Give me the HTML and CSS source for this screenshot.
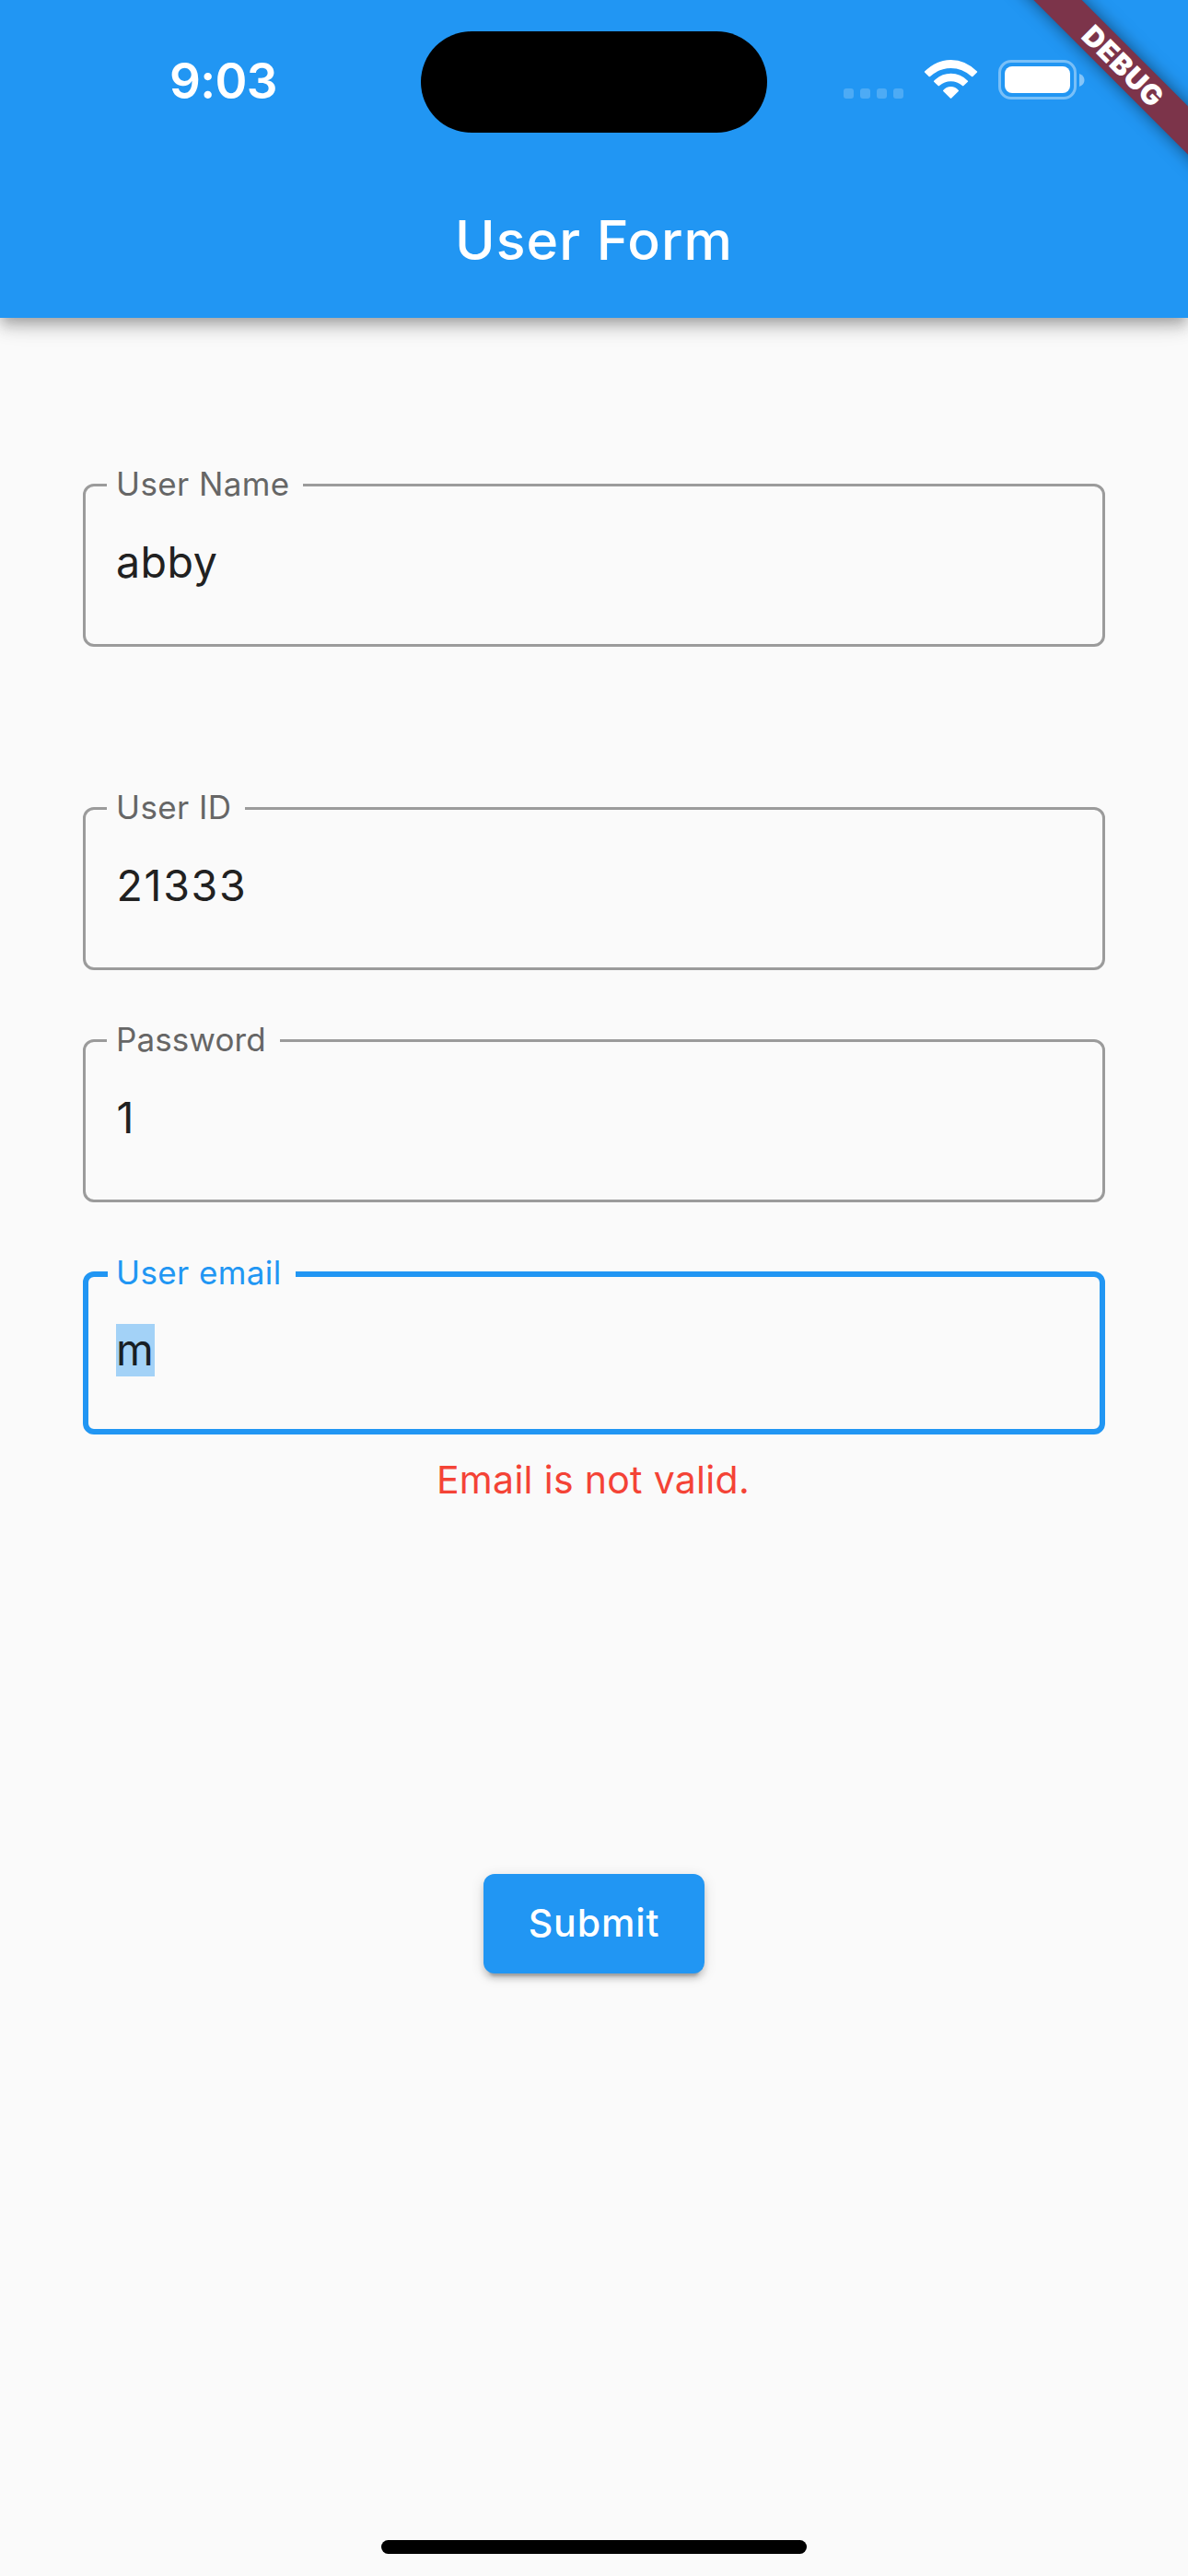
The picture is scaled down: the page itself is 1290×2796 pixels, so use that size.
FILE: index.html
```html
<!DOCTYPE html>
<html lang="en">
<head>
<meta charset="utf-8">
<title>User Form</title>
<link rel="stylesheet" href="styles.css">
</head>
<body>
<div class="screen">
  <header class="app-bar">
    <div class="status-bar">
      <span class="time">9:03</span>
      <span class="island"></span>
      <svg class="status-icons" width="264" height="44" viewBox="0 0 264 44">
        <g fill="#fff" fill-opacity=".2">
          <rect x="0" y="31" width="11" height="11" rx="3"/>
          <rect x="18" y="31" width="11" height="11" rx="3"/>
          <rect x="36" y="31" width="11" height="11" rx="3"/>
          <rect x="54" y="31" width="11" height="11" rx="3"/>
        </g>
        <g fill="#fff">
          <path d="M88 12.600Q87.600 13 88 13.500L92.600 18Q93.300 18.600 94 18Q104 9 116.500 9Q129 9 139 18Q139.700 18.600 140.400 18L145 13.500Q145.400 13 145 12.600Q132.500 0 116.500 0Q100.500 0 88 12.600Z"/>
          <path d="M98.100 22.700Q97.600 23.200 98.100 23.700L102.600 28.100Q103.200 28.700 104 28.100Q109.500 23.300 116.500 23.300Q123.500 23.300 129 28.100Q129.800 28.700 130.400 28.100L134.900 23.700Q135.400 23.200 134.900 22.700Q127 14.800 116.500 14.800Q106 14.800 98.100 22.700Z"/>
          <path d="M108.200 32.900Q107.700 33.400 108.200 33.900L115.800 41.500Q116.500 42.200 117.200 41.500L124.800 33.900Q125.300 33.400 124.800 32.900Q121.500 29 116.500 29Q111.500 29 108.200 32.900Z"/>
        </g>
        <rect x="169.500" y="1.500" width="82" height="40" rx="12.500" fill="none" stroke="#fff" stroke-opacity=".4" stroke-width="3"/>
        <rect x="175" y="7" width="71" height="29" rx="8" fill="#fff"/>
        <path d="M256 15Q261.500 17 261.500 22Q261.500 27 256 29Z" fill="#fff" fill-opacity=".45"/>
      </svg>
    </div>
    <h1 class="title">User Form</h1>
  </header>
  <div class="debug-banner">DEBUG</div>

  <main class="form">
    <div class="field field-name">
      <span class="label">User Name</span>
      <span class="value">abby</span>
    </div>
    <div class="field field-id">
      <span class="label">User ID</span>
      <span class="value digits">21333</span>
    </div>
    <div class="field field-password">
      <span class="label">Password</span>
      <span class="value digits">1</span>
    </div>
    <div class="field field-email focused">
      <span class="label">User email</span>
      <span class="value"><span class="selected">m</span></span>
    </div>
    <p class="error">Email is not valid.</p>
    <button class="submit" type="button">Submit</button>
  </main>
  <div class="home-indicator"></div>
</div>
</body>
</html>
```

FILE: styles.css
```css
* { box-sizing: border-box; }

body {
  margin: 0;
  font-family: Inter, "Liberation Sans", sans-serif;
  background: #fafafa;
  color: #212121;
}

.screen {
  position: relative;
  display: flex;
  flex-direction: column;
  width: 1290px;
  height: 2796px;
  overflow: hidden;
  background: #fafafa;
}

.app-bar {
  flex: none;
  height: 345px;
  background: #2196f3;
  color: #fff;
  box-shadow: 0 6px 12px -3px rgba(0, 0, 0, .2), 0 12px 15px rgba(0, 0, 0, .14), 0 3px 30px rgba(0, 0, 0, .12);
}

.status-bar {
  display: grid;
  grid-template-columns: 457px 376px 1fr;
  height: 177px;
}

.time {
  padding-left: 184px;
  margin-top: 56px;
  font-size: 53px;
  line-height: 64px;
  font-weight: 600;
  letter-spacing: -.7px;
}

.island {
  margin-top: 33.500px;
  height: 110.500px;
  border-radius: 56px;
  background: #000;
}

.status-icons {
  margin: 65px 0 0 83px;
}

.title {
  margin: 0;
  height: 168px;
  line-height: 168px;
  text-align: center;
  font-size: 59px;
  font-weight: 550;
  letter-spacing: 1px;
}

/* corner ribbon */
.debug-banner {
  position: absolute;
  left: 1019px;
  top: 52px;
  width: 400px;
  height: 37px;
  padding-left: 3px;
  transform: rotate(45deg);
  background: #7c344a;
  box-shadow: 0 0 18px rgba(0, 0, 0, .5);
  color: #fff;
  text-align: center;
  font-size: 30.600px;
  line-height: 37px;
  font-weight: 900;
  letter-spacing: .8px;
}

.form {
  display: flex;
  flex-direction: column;
  padding: 180px 90px 0;
}

.field {
  position: relative;
  height: 177px;
  padding: 54px 33px 0;
  border: 3px solid #9b9b9b;
  border-radius: 12px;
}

.field-id { margin-top: 174px; }
.field-password, .field-email { margin-top: 75px; }

/* label sits over the outline and interrupts it */
.label {
  position: absolute;
  left: 23px;
  top: -25px;
  padding: 0 0 0 10px;
  background: #fafafa;
  color: #666;
  font-size: 35px;
  line-height: 44px;
  letter-spacing: .4px;
  white-space: nowrap;
}

.field-name .label { width: 213px; }
.field-id .label { width: 150px; }
.field-password .label { width: 188px; letter-spacing: .1px; }

.value {
  display: block;
  font-size: 46.500px;
  line-height: 57px;
  letter-spacing: .5px;
}

.digits {
  letter-spacing: 1.700px;
  padding-left: .5px;
}

.focused {
  padding: 51px 30px 0;
  border: 6px solid #2196f3;
}

.focused .label {
  left: 21px;
  top: -27px;
  width: 204px;
  padding-left: 9px;
  color: #2196f3;
}

.selected {
  display: inline-block;
  width: 42px;
  background: #a3d2f7;
  color: #181f25;
}

.error {
  margin: 25px 0 0;
  padding-right: 2px;
  text-align: center;
  color: #f44336;
  font-size: 41px;
  line-height: 48px;
  letter-spacing: .3px;
}

.submit {
  align-self: center;
  width: 240px;
  height: 108px;
  margin-top: 404px;
  padding: 0 0 2px;
  border: 0;
  border-radius: 12px;
  background: #2196f3;
  color: #fff;
  font: 550 41px/106px Inter, sans-serif;
  letter-spacing: .9px;
  box-shadow: 0 9px 3px -6px rgba(0, 0, 0, .2), 0 6px 6px rgba(0, 0, 0, .14), 0 3px 15px rgba(0, 0, 0, .12);
}

.home-indicator {
  align-self: center;
  width: 462px;
  height: 15px;
  margin: auto 0 24px;
  border-radius: 8px;
  background: #000;
}
```
